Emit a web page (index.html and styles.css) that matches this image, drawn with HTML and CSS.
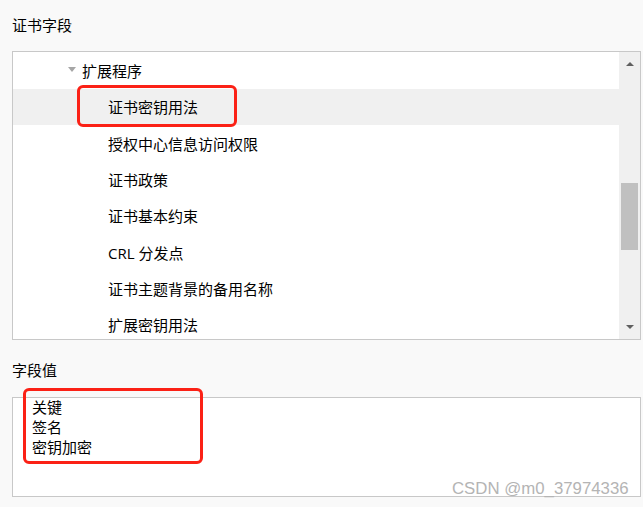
FILE: index.html
```html
<!DOCTYPE html>
<html lang="zh-CN">
<head>
  <meta charset="UTF-8">
  <title>证书字段</title>
  <link rel="stylesheet" href="styles.css">
</head>
<body>
  <div class="panel">
    <div class="label">证书字段</div>
    <div class="tree">
      <ul class="tree-list">
        <li class="row parent"><span class="caret"></span>扩展程序</li>
        <li class="row child selected">证书密钥用法</li>
        <li class="row child">授权中心信息访问权限</li>
        <li class="row child">证书政策</li>
        <li class="row child">证书基本约束</li>
        <li class="row child">CRL 分发点</li>
        <li class="row child">证书主题背景的备用名称</li>
        <li class="row child">扩展密钥用法</li>
      </ul>
      <div class="scrollbar">
        <span class="arrow up"></span>
        <div class="track"><div class="thumb"></div></div>
        <span class="arrow down"></span>
      </div>
    </div>

    <div class="label value-label">字段值</div>
    <div class="value-box">
      <div class="value-lines">
        <div>关键</div>
        <div>签名</div>
        <div>密钥加密</div>
      </div>
    </div>

    <!-- red annotation frames and watermark lie over the content -->
    <div class="mark mark-row"></div>
    <div class="mark mark-value"></div>
    <div class="watermark">CSDN @m0_37974336</div>
  </div>
</body>
</html>
```

FILE: styles.css
```css
body {
  margin: 0;
  background-color: #f9f9f9;
  font-family: "Open Sans", "Noto Sans CJK SC", sans-serif;
  font-size: 15px;
  color: #000;
}
.panel {
  position: relative;
  height: 507px;
  padding: 15px 2px 0 12px;
  box-sizing: border-box;
}
.label {
  height: 20px;
  line-height: 20px;
  margin-bottom: 16px;
}
.value-label {
  margin-top: 20px;
  margin-bottom: 17px;
}
.tree {
  display: flex;
  height: 289px;
  border: 1px solid #c8c8c8;
  background-color: #fff;
  box-sizing: border-box;
  overflow: hidden;
}
.tree-list {
  flex: 1;
  list-style: none;
  margin: 0;
  padding: 0.5px 0 0;
}
.row {
  display: flex;
  align-items: center;
  height: 36.3px;
  white-space: nowrap;
}
.parent {
  padding-left: 55px;
}
.child {
  padding-left: 95px;
}
.selected {
  background-color: #f0f0f0;
}
.caret {
  width: 0;
  height: 0;
  border-left: 4.5px solid transparent;
  border-right: 4.5px solid transparent;
  border-top: 5px solid #a6a6a6;
  margin-right: 6px;
  margin-top: -2px;
}
.scrollbar {
  width: 21px;
  background-color: #f0f0f0;
  display: flex;
  flex-direction: column;
  align-items: center;
}
.arrow {
  width: 0;
  height: 0;
  border-left: 4px solid transparent;
  border-right: 4px solid transparent;
}
.arrow.up {
  border-bottom: 4px solid #606060;
  margin-top: 10px;
}
.arrow.down {
  border-top: 4px solid #606060;
  margin-bottom: 10px;
}
.track {
  flex: 1;
  width: 100%;
  padding-top: 117px;
  box-sizing: border-box;
}
.thumb {
  width: 17px;
  height: 67px;
  margin-left: 2px;
  background-color: #c0c0c0;
}
.value-box {
  height: 100px;
  border: 1px solid #c8c8c8;
  background-color: #fff;
  box-sizing: border-box;
  padding: 0 0 0 19px;
  line-height: 20px;
}
.value-lines {
  margin-top: -1px;
}
.mark {
  position: absolute;
  border: 3px solid #fb2116;
  border-radius: 6px;
  box-sizing: border-box;
}
.mark-row {
  left: 77px;
  top: 85px;
  width: 160px;
  height: 42px;
}
.mark-value {
  left: 23px;
  top: 388px;
  width: 180px;
  height: 76px;
}
.watermark {
  position: absolute;
  left: 452px;
  top: 479px;
  font-family: "Liberation Sans", Arial, sans-serif;
  font-size: 16.8px;
  color: #b4b4b4;
}
```
